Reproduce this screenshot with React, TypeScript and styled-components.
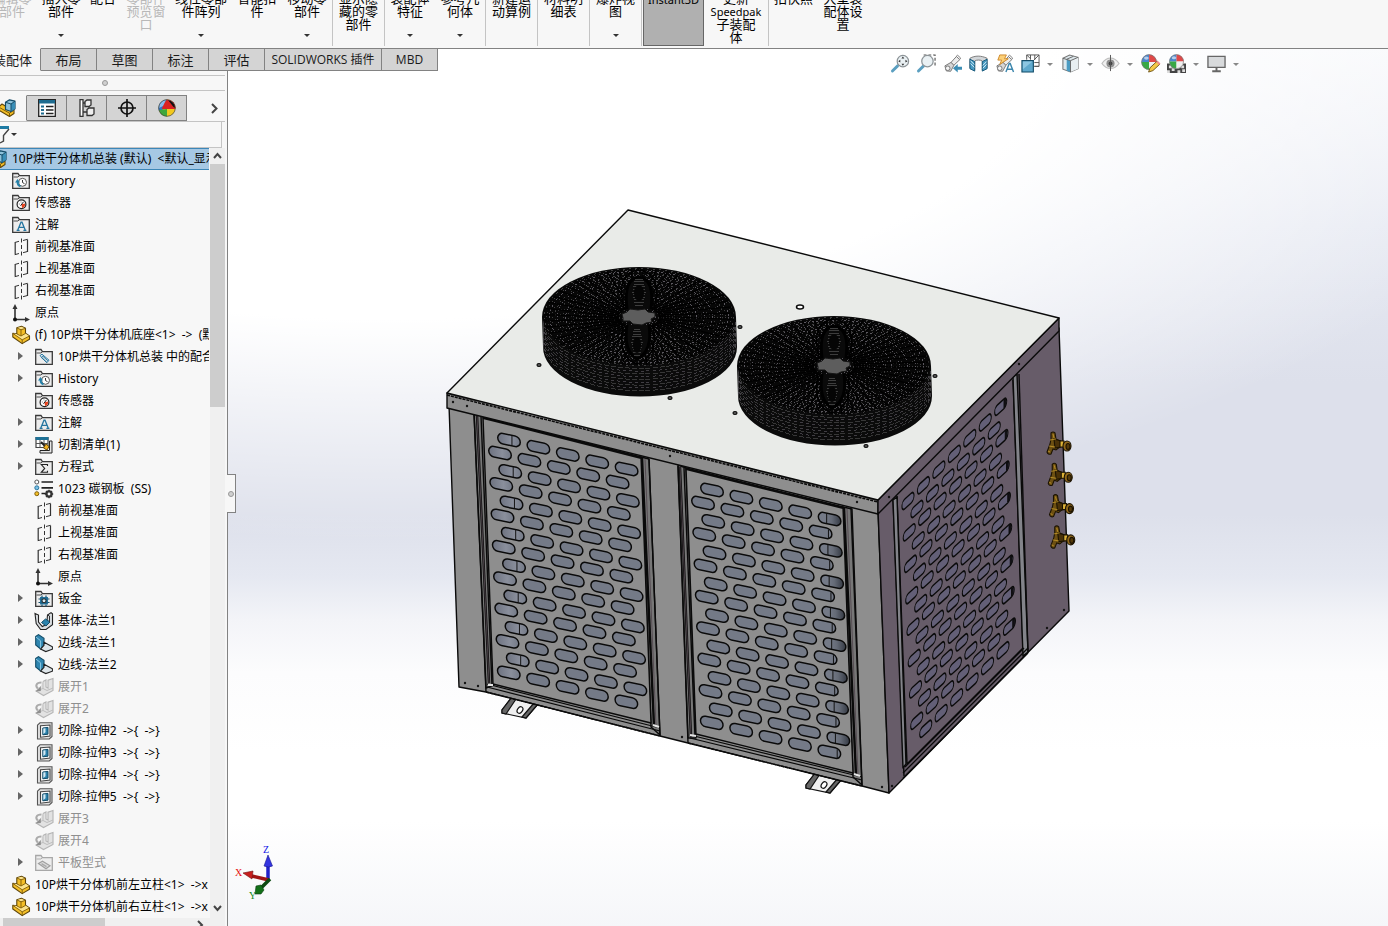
import React from "react";
import styled, { createGlobalStyle } from "styled-components";

const Global = createGlobalStyle`
  * { box-sizing: border-box; }
  body { margin: 0; overflow-x: hidden; }
  body, button, input {
    font-family: "Noto Sans", "Noto Sans CJK SC", sans-serif;
    font-size: 12px;
    color: #000;
  }
  button { padding: 0; border: 0; background: none; }
  ul { list-style: none; margin: 0; padding: 0; }
`;

const LINE = "#828282";

const Page = styled.div`
  display: flex;
  flex-direction: column;
  min-height: 100vh;
`;

/* ---------- ribbon ---------- */

const Ribbon = styled.header`
  display: flex;
  flex: none;
  height: 49px;
  overflow: hidden;
  background: #f7f7f7;
  border-bottom: 1px solid ${LINE};
`;

const Command = styled.button<{ $w: number; $sep?: boolean; $pressed?: boolean; $first?: boolean }>`
  display: flex;
  flex: none;
  flex-direction: column;
  align-items: center;
  width: ${(p) => p.$w}px;
  height: 54px;
  margin-top: -8px;
  margin-left: ${(p) => (p.$first ? -14 : p.$pressed ? 1 : 0)}px;
  padding-bottom: 9px;
  font-size: 13px;
  line-height: 13px;
  white-space: nowrap;
  background: ${(p) => (p.$pressed ? "#b0b0b0" : "none")};
  border: ${(p) => (p.$pressed ? "1px solid #666" : "0")};
  ${(p) => p.$sep && "border-right: 1px solid #c4c4c4;"}
  &:disabled { color: #b8b8b8; }
`;

const CommandText = styled.span`
  white-space: pre;
`;

const Small = styled.span`
  font-size: 11px;
  line-height: 1;
`;

const Caret = styled.span<{ $color?: string }>`
  width: 0;
  height: 0;
  border: 3px solid transparent;
  border-top-color: ${(p) => p.$color ?? "#333"};
  border-bottom: 0;
`;

const CommandCaret = styled(Caret)`
  margin-top: auto;
`;

type Cmd = { text: string; w: number; sep?: boolean; menu?: boolean; off?: boolean; pressed?: boolean };
const commands: Cmd[] = [
  { text: "编辑零\n部件", w: 52, off: true },
  { text: "插入零\n部件", w: 46, menu: true },
  { text: "配合", w: 38 },
  { text: "零部件\n预览窗\n口", w: 48, off: true },
  { text: "线性零部\n件阵列", w: 62, menu: true },
  { text: "智能扣\n件", w: 50 },
  { text: "移动零\n部件", w: 51, sep: true, menu: true },
  { text: "显示隐\n藏的零\n部件", w: 52, sep: true },
  { text: "装配体\n特征", w: 50, menu: true },
  { text: "参考几\n何体", w: 51, sep: true, menu: true },
  { text: "新建运\n动算例", w: 52, sep: true },
  { text: "材料明\n细表", w: 52, sep: true },
  { text: "爆炸视\n图", w: 52, sep: true, menu: true },
  { text: "Instant3D", w: 61, pressed: true },
  { text: "更新\nSpeedpak\n子装配\n体", w: 65, sep: true },
  { text: "拍快照", w: 49 },
  { text: "大型装\n配体设\n置", w: 50 },
];

/* ---------- workspace ---------- */

const Workspace = styled.div`
  display: flex;
  flex: 1;
  flex-direction: column;
  background:
    radial-gradient(ellipse 86% 56% at 28% 0, #fff 55%, rgba(255, 255, 255, 0) 100%),
    linear-gradient(#f7f8fb, #e6e9f2 20%, #dde0eb 38%, #dde0eb 53%, #e5e8f1 60%, #f3f4f8 65%, #fcfcfd 71%, #fff 80%, #fff 88%, #f5f6f9);
`;

const TopRow = styled.div`
  display: flex;
  flex: none;
  justify-content: space-between;
  height: 22px;
`;

const TabList = styled.nav`
  display: flex;
  margin-top: -1px;
`;

const Tab = styled.button<{ $w: number; $active?: boolean }>`
  width: ${(p) => p.$w}px;
  height: 23px;
  display: flex;
  justify-content: ${(p) => (p.$active ? "flex-end" : "center")};
  align-items: center;
  padding-right: ${(p) => (p.$active ? 8 : 0)}px;
  overflow: hidden;
  white-space: nowrap;
  line-height: 20px;
  color: #1a1a1a;
  font-size: 13px;
  background: ${(p) => (p.$active ? "#f7f7f7" : "#d4d4d4")};
  border: 1px solid ${LINE};
  border-left: 0;
  ${(p) => p.$active && "border-top-color: #f7f7f7; border-bottom-color: #f7f7f7;"}
`;

const TabSmall = styled.span`
  font-size: 12px;
  font-family: "Open Sans", "Noto Sans CJK SC", sans-serif;
`;

const tabs: [string, number][] = [["装配体", 41], ["布局", 56], ["草图", 56], ["标注", 56], ["评估", 56], ["SOLIDWORKS 插件", 117], ["MBD", 56]];

const Hud = styled.div`
  display: flex;
  align-items: center;
  height: 20px;
  margin: 5px 145px 0 0;
`;

const HudButton = styled.button`
  display: flex;
  justify-content: center;
  width: 26px;
  height: 20px;
`;

const HudMenu = styled.button`
  display: flex;
  justify-content: center;
  width: 14px;
`;

const Body = styled.div`
  display: flex;
  flex: 1;
`;

/* ---------- feature manager ---------- */

const Sidebar = styled.aside`
  position: relative;
  display: flex;
  flex: none;
  flex-direction: column;
  width: 228px;
  padding-right: 2px;
  background: #f7f7f7;
  border-right: 1px solid ${LINE};
`;

const Grip = styled.div`
  display: flex;
  flex: none;
  align-items: center;
  justify-content: center;
  height: 16px;
  margin-top: 4px;
  padding-right: 16px;
  border: solid #c4c4c4;
  border-width: 1px 0;
`;

const Dot = styled.span`
  width: 6px;
  height: 6px;
  border: 1px solid #999;
  border-radius: 50%;
  background: #d0d0d0;
`;

const PaneTabs = styled.div`
  display: flex;
  flex: none;
  height: 27px;
  margin-top: 4px;
  border-bottom: 1px solid #c4c4c4;
`;

const PaneTab = styled.button<{ $active?: boolean }>`
  display: flex;
  align-items: center;
  justify-content: center;
  width: ${(p) => (p.$active ? 27 : 40)}px;
  height: 26px;
  overflow: hidden;
  background: ${(p) => (p.$active ? "#f7f7f7" : "#d4d4d4")};
  border: 1px solid ${LINE};
  border-left: 0;
  ${(p) => p.$active && "border-color: #f7f7f7 #828282 #f7f7f7 #f7f7f7; justify-content: flex-end; padding-right: 9px;"}
`;

const More = styled.button`
  margin: 0 7px 0 auto;
  display: flex;
  align-items: center;
`;

const Filter = styled.div`
  display: flex;
  flex: none;
  align-items: center;
  gap: 2px;
  height: 26px;
  margin-right: 3px;
  border: solid #c4c4c4;
  border-width: 0 1px 1px 0;
`;

const FilterInput = styled.input`
  flex: 1;
  min-width: 0;
  height: 22px;
  border: 0;
  outline: 0;
  background: none;
`;

const TreeArea = styled.div`
  display: flex;
  flex: 1;
`;

const Tree = styled.ul`
  flex: 1;
  min-width: 0;
  margin-right: 1px;
  overflow: hidden;
`;

const Row = styled.li<{ $level: number; $off?: boolean }>`
  display: flex;
  align-items: center;
  gap: 4px;
  height: 22px;
  padding-left: ${(p) => (p.$level === 0 ? 12 : p.$level === 1 ? 16 : 0)}px;
  line-height: 20px;
  white-space: pre;
  color: ${(p) => (p.$off ? "#8f8f8f" : "#000")};
  ${(p) => p.$level < 0 && "background: #a6c8e4; border: solid #3d87b8; border-width: 1px 0; margin-left: -11px;"}
`;

const Twisty = styled.button<{ $hidden?: boolean }>`
  flex: none;
  width: 15px;
  height: 16px;
  visibility: ${(p) => (p.$hidden ? "hidden" : "visible")};
  &::before {
    content: "";
    display: block;
    width: 0;
    margin: 0 0 2px 2px;
    border: 4px solid transparent;
    border-left: 5px solid #666;
    border-right: 0;
  }
`;

const VScroll = styled.div`
  display: flex;
  flex: none;
  flex-direction: column;
  align-items: center;
  justify-content: space-between;
  width: 15px;
  padding: 4px 0 6px;
  background: #f0f0f0;
`;

const VThumb = styled.div`
  width: 15px;
  height: 243px;
  margin: 5px 0 auto;
  background: #cdcdcd;
`;

const HScroll = styled.div`
  display: flex;
  flex: none;
  justify-content: space-between;
  height: 9px;
  padding: 0 21px 0 3px;
  overflow: hidden;
  background: #f0f0f0;
`;

const HThumb = styled.div`
  width: 102px;
  height: 9px;
  background: #cdcdcd;
`;

const Handle = styled.button`
  position: absolute;
  right: -9px;
  top: 403px;
  display: flex;
  align-items: center;
  justify-content: center;
  width: 9px;
  height: 39px;
  background: #f7f7f7;
  border: 1px solid ${LINE};
  border-left: 0;
`;

const Viewport = styled.main`
  flex: 1;
  min-width: 0;
`;

const Drawing = styled.svg`
  display: block;
  width: 100%;
  height: auto;
`;

/* ---------- icons ---------- */

const Ico = styled.svg`
  flex: none;
  overflow: visible;
`;

const Folder = ({ c = "#3a3a3a" }: { c?: string }) => (
  <g>
    <path d="M.7 16.3V1.5h5.300l1.400 2.200h9.900v12.600z" fill="#ededed" stroke={c} strokeWidth="1.300" />
    <path d="M1.500 5h4.500l1.200-1.200" stroke={c} fill="none" strokeWidth=".9" />
  </g>
);

const glyphs: Record<string, React.ReactNode> = {
  history: (<><Folder /><circle cx="10.500" cy="10.300" r="4" fill="#fff" stroke="#555" /><path d="M10.500 8v2.500l2 1.200" stroke="#333" fill="none" /><path d="M8.500 14.500Q5.500 13.500 5.500 10" stroke="#2380a8" strokeWidth="1.800" fill="none" /><path d="M3 10.500h5L5.500 7z" fill="#2380a8" /></>),
  sensor: (<><Folder /><circle cx="9.500" cy="10.200" r="4.400" fill="#fff" stroke="#222" strokeWidth="1.200" /><path d="M9.500 10.300 13 9.500a4 4 0 0 1-3 4.500z" fill="#e8431c" /><path d="m8.500 11.800 3-4" stroke="#222" /><path d="M6.800 10h1M9 7.500v1" stroke="#777" /></>),
  note: (<><Folder /><path d="M5.800 14 9 6.200h1l3.200 7.800M7.200 11.400h4.600M4.600 14.300h3M11.400 14.300h3" stroke="#2676a0" strokeWidth="1.300" fill="none" /></>),
  mates: (<><Folder /><path d="m5 7.600 2-1.400 7 6-2 2.400-5.600-5 1.400-1.400 5 4.600M5 7.600l6.800 7" stroke="#2676a0" fill="none" /></>),
  sigma: (<><Folder /><path d="M12.500 8V6.500H6.300l3.400 3.900-3.400 3.900h6.200v-1.500" stroke="#222" strokeWidth="1.100" fill="none" /></>),
  sheet: (<><Folder /><path d="M5 7h8v7.500H5z" fill="#2676a0" /><path d="M7 5.500v11M11 5.500v11M3.500 9h11M3.500 12.500h11" stroke="#15506e" strokeWidth="1.200" strokeDasharray="2 1" /><circle cx="9" cy="10.800" r="2" fill="#dce8ee" stroke="#222" /></>),
  flat: (<><Folder c="#a8a8a8" /><path d="m3.500 9.500 4-2.200 7.500 4.500-4 3z" fill="#ddd" stroke="#a0a0a0" strokeWidth="1.200" /><path d="m6.500 9.600 5 3" stroke="#aaa" strokeWidth="1.600" /></>),
  plane: (<><path d="M3.200 4.200V16.500M15.500 1.500V14" fill="none" stroke="#333" strokeWidth="1.200" /><path d="m2.800 4.500 4.200-1.200M11 2.500l4.500-1.200M2.800 16.700 7 15.500M11 14.700l4.500-1.200" stroke="#333" /><path d="M9.500 .5v17" stroke="#333" strokeDasharray="4 2.500" /></>),
  origin: (<><path d="M3 3v12.500h12" fill="none" stroke="#333" strokeWidth="1.600" /><path d="m.5 5 2.500-5 2.500 5zM13 13l5 2.500-5 2.500z" fill="#333" /><circle cx="3" cy="15.500" r="2" fill="#111" /></>),
  part: (<><path d="M4.800 1.700 9.500.3l4 2v5l4 2.700v3.300l-7.300 4.300L.8 11V7.300l4 .6z" fill="#f4bf27" stroke="#5e4509" strokeWidth="1.100" strokeLinejoin="round" /><path d="m5.200 2 4.300-1.200 3.600 1.600L9 3.600zM1.200 7.600l3.600.4L9 10l4.500-2.500 3.600 2.500-6.900 3.800z" fill="#fce48c" /><path d="M9 3.800v6M5 2l4 1.800 4.500-1.500M5 8l4 2 4.500-2.600M1 7.500l9.200 6.300 7.300-3.800M10.200 13.800v3.500" stroke="#7d5b0c" strokeWidth=".9" fill="none" /></>),
  asm: (<><path d="M.5 8 4 5l5 3 7 3v3.500l-4.500 3L.5 11z" fill="#f4bf27" stroke="#5e4509" strokeWidth="1.100" strokeLinejoin="round" /><path d="m1 8.200 10.500 6 4.500-3M11.500 14v3.500" stroke="#7d5b0c" fill="none" /><path d="m7.500 3.300 4-2.500 5.500 1.400v7.600L13 12.500l-5.500-2z" fill="#8dc2dc" stroke="#134c68" strokeWidth="1.200" strokeLinejoin="round" /><path d="M13 5v7.500l4-2.700V2.500z" fill="#3a8fb8" /><path d="M7.500 3.300 13 5l4-2.800M13 5v7.500" stroke="#134c68" fill="none" /></>),
  cutlist: (<><path d="M1 1.500h12v10H1z" fill="#fff" stroke="#444" strokeWidth="1.200" /><path d="M.5 1h13v3H.5z" fill="#1e7196" /><path d="M1 7.500h12M5 4v7.500M9 4v7.500" stroke="#555" /><path d="M17 5v12H5v-2.500h9.500V5z" fill="#e8e8e8" stroke="#222" /><path d="m6 6 4 4" stroke="#222" strokeWidth="2" /><path d="m11 8 3 2.500-2 3.500-3.500-2z" fill="#f3b322" stroke="#6b4e0a" /></>),
  material: (<><path d="M6.500 2H18M6.500 7.800H18M6.500 13.500H12" stroke="#222" strokeWidth="1.700" /><circle cx="1.800" cy="2" r="2" fill="#fff" stroke="#555" /><circle cx="1.800" cy="7.800" r="2" fill="#7ec0e4" stroke="#2676a0" /><circle cx="1.800" cy="13.700" r="2" fill="#f4bf27" stroke="#80600d" /><circle cx="14" cy="14" r="2.600" fill="none" stroke="#333" strokeWidth="2.200" /><path d="M14 9.800v8.400M9.800 14h8.400M11 11l6 6M17 11l-6 6" stroke="#333" strokeWidth="1.300" /><circle cx="14" cy="14" r="1.400" fill="#f7f7f7" /></>),
  base: (<><path d="M0 1.500 3.500 3v7l3.800 4.600 4.400-2.300L12.500 3 16 .6l1.500 1.200v11L11 17.500H5.600L1.200 11.600z" fill="#d9dde0" stroke="#222" strokeWidth="1.100" /><path d="m6.500 10.500 4-3.500 4.500 3-4 4z" fill="#2c83ad" stroke="#134c68" /><path d="m12.500 3 2 1v6" stroke="#333" fill="none" /></>),
  edge: (<><path d="M.7 2.500 3.500.6 9 4.400v7L5.600 15 .7 11z" fill="#2f86b0" stroke="#134c68" strokeWidth="1.100" /><path d="m1 3 4.600 3.800v8" stroke="#8ec9e4" fill="none" /><path d="m5.600 15 3.400-3.600V8.200l8.400 4.600v2.400l-6.600 2.400z" fill="#dfe6ea" stroke="#222" strokeWidth="1.100" /></>),
  unfold: (<><path d="M8 3.500 11 2v7l2 1V2.200l5-1.700v12L8.500 17.500 1 13l3-2" fill="#e2e2e2" stroke="#b5b5b5" strokeWidth="1.100" /><path d="M8 3.500v7l4 2 6-2.500M8 10.500 4 12" stroke="#bdbdbd" fill="none" /><path d="M6.500 4.500C1 4.500 0 8 3 10.500" stroke="#ababab" strokeWidth="2" fill="none" /><path d="m.8 13.500 5-.5V8z" fill="#8f8f8f" /></>),
  cut: (<><path d="M2.500 3.200 5 .8h12v13.700L14.300 17H2.500z" fill="#e2e2e2" stroke="#555" strokeWidth="1.100" /><path d="M5.500 3.800 15 3v11l-9.500 1.200z" fill="#fafafa" stroke="#444" strokeWidth="1.100" /><path d="M7.800 6 13 5.400v6.800l-5.200.6z" fill="#2c83ad" stroke="#134c68" /><path d="M8.300 6.500 10.500 6.200v4L8.300 12z" fill="#d4e9f3" /></>),
};

const TreeIcon = ({ name }: { name: string }) => (
  <Ico width="19" height="18" viewBox="0 0 19 18" aria-hidden="true">{glyphs[name]}</Ico>
);

const Ball = ({ s = 18 }: { s?: number }) => (
  <g transform={`scale(${s / 18})`}>
    <circle cx="9" cy="9" r="8.500" fill="#e8e8e8" />
    <path d="M9 9V.5A8.500 8.500 0 0 0 .5 9z" fill="#4a86cc" />
    <path d="M9 9H.5A8.500 8.500 0 0 0 9 17.500z" fill="#39a845" />
    <path d="M9 9V.5A8.500 8.500 0 0 1 17.500 9z" fill="#e04848" />
    <path d="M9 9h8.500A8.500 8.500 0 0 1 9 17.500z" fill="#f0f0f0" />
    <circle cx="9" cy="9" r="8.300" fill="none" stroke="#777" strokeWidth=".8" />
    <ellipse cx="6" cy="4.500" rx="2.600" ry="1.800" fill="#fff" opacity=".6" />
  </g>
);

const Lens = ({ x }: { x: number }) => (
  <>
    <path d="m1.500 18 5.500-5.500" stroke="#5b9fc0" strokeWidth="3" strokeLinecap="round" />
    <circle cx={x} cy="7.500" r="6" fill="#eaf1f4" stroke="#8d9498" strokeWidth="1.300" />
  </>
);

const Scope = () => (
  <>
    <path d="M2 12.500 8.500 8.800l3 3-3.400 6.400-4.600-.4z" fill="#d6d6d6" stroke="#777" />
    <path d="m8.500 8.800 6-6.600L18 5.600l-6.500 6.200z" fill="#ececec" stroke="#777" />
    <circle cx="5" cy="15" r="2.400" fill="#f4f4f4" stroke="#777" />
    <path d="m14 2.500 1.400-1.200 3.200 3-1.200 1.400z" fill="#fff" stroke="#777" />
  </>
);

type HudItem = { label: string; art: React.ReactNode; menu?: boolean };
const hud: HudItem[] = [
  { label: "整屏显示全图", art: <><Lens x={12.5} /><path d="M12.500 2.600 14 4.800h-3zM12.500 12.400l-1.500-2.200h3zM7.600 7.500 9.800 6v3zM17.400 7.500 15.200 9V6z" fill="#333" /></> },
  { label: "局部放大", art: <><path d="M7 1h12v12" stroke="#555" strokeWidth="1.200" strokeDasharray="3 2" fill="none" /><Lens x={11} /></> },
  { label: "上一视图", art: <><Scope /><path d="M20 16.500h-4.500V19.500L10.500 15l5-4.500v3H20z" fill="#3c8db4" /></> },
  { label: "剖面视图", art: <><path d="M1 4.500c5-3 12-3 18 0V15l-5 2V7.400c-2-1.400-6-1.400-8 0V17l-5-2z" fill="#d2d6d9" stroke="#777" /><path d="M1 5.500 6 8v10l-5-2.500zM14 8l5-2.500v10L14 18z" fill="#4a9bc2" stroke="#155a7c" /><path d="m1.500 10 4 4M1.500 7l4 4M14.500 12l4-4M14.500 15l4-4" stroke="#d9eef8" /></> },
  { label: "动态注解视图", art: <><Scope /><path d="M5 1h7l-2 4h4L5 11l2-4.600H3z" fill="#fbd078" stroke="#d08a2c" /><path d="m11.500 19 3.500-9h1l3.500 9M13 16h5" stroke="#3c86ad" strokeWidth="1.500" fill="none" /></> },
  { label: "视图定向", menu: true, art: <><path d="M6 6V1h13v12h-5M6 1l4 4M19 1l-6 6M14 13h5M10 1v5M14.500 1v5M14 9h5" fill="none" stroke="#555" /><path d="M1 7h12v12H1z" fill="#5fa9cd" stroke="#134c68" strokeWidth="1.200" /><path d="M2 8h10L2 16z" fill="#8cc6e1" /></> },
  { label: "显示样式", menu: true, art: <><path d="m2 4.500 7-3.500 9 2.500v12L10 19l-8-3z" fill="#dde8ed" stroke="#777" strokeWidth="1.100" /><path d="M10 7v12l8-3.500v-12z" fill="#e8eef1" /><path d="M6 5.500v12l4 1.500V7z" fill="#4a9bc2" /><path d="M10 7v12M2 4.500 10 7l8-3.500M6 5.500l7-3" fill="none" stroke="#666" /></> },
  { label: "隐藏/显示项目", menu: true, art: <><path d="M1 10c5-7.500 13-7.500 18 0-5 7-13 7-18 0z" fill="#f0f0f0" stroke="#c0c0c0" strokeWidth="1.300" /><circle cx="10" cy="10" r="4.300" fill="#909090" /><circle cx="10" cy="10" r="2" fill="#444" /><path d="M10 1v17" stroke="#555" /></> },
  { label: "编辑外观", art: <><Ball s={17} /><path d="m8 19 1.500-4.500L17 7.500l3 3-7.500 7z" fill="#f5c945" stroke="#70551a" /><path d="m16 8.500 1.500-1.500 3 3-1.500 1.500z" fill="#ec8d8d" /></> },
  { label: "应用布景", menu: true, art: <><path d="M0 10h20v10H0z" fill="#444" /><path d="M2 12h3v3H2zM15 12h3v3h-3zM5 15h3v3H5zM11 17h3v3h-3zM0 17h3v3H0zM16 16h3v3h-3z" fill="#ddd" /><g transform="translate(2 0)"><Ball s={16} /></g></> },
  { label: "视图设置", menu: true, art: <><path d="M1 2.500h18v11.500H1z" fill="#d8dadc" stroke="#666" strokeWidth="1.400" /><path d="M10 14v4M5.500 18.200h9" stroke="#666" strokeWidth="2" /></> },
];

/* ---------- tree data ---------- */

type Node = [level: number, icon: string, text: string, expandable?: boolean, off?: boolean];
const nodes: Node[] = [
  [-1, "asm", "10P烘干分体机总装 (默认)  <默认_显示状态-1>"],
  [0, "history", "History"],
  [0, "sensor", "传感器"],
  [0, "note", "注解"],
  [0, "plane", "前视基准面"],
  [0, "plane", "上视基准面"],
  [0, "plane", "右视基准面"],
  [0, "origin", "原点"],
  [0, "part", "(f) 10P烘干分体机底座<1>  ->  (默认)"],
  [1, "mates", "10P烘干分体机总装 中的配合", true],
  [1, "history", "History", true],
  [1, "sensor", "传感器"],
  [1, "note", "注解", true],
  [1, "cutlist", "切割清单(1)", true],
  [1, "sigma", "方程式", true],
  [1, "material", "1023 碳钢板  (SS)"],
  [1, "plane", "前视基准面"],
  [1, "plane", "上视基准面"],
  [1, "plane", "右视基准面"],
  [1, "origin", "原点"],
  [1, "sheet", "钣金", true],
  [1, "base", "基体-法兰1", true],
  [1, "edge", "边线-法兰1", true],
  [1, "edge", "边线-法兰2", true],
  [1, "unfold", "展开1", false, true],
  [1, "unfold", "展开2", false, true],
  [1, "cut", "切除-拉伸2  ->{  ->}", true],
  [1, "cut", "切除-拉伸3  ->{  ->}", true],
  [1, "cut", "切除-拉伸4  ->{  ->}", true],
  [1, "cut", "切除-拉伸5  ->{  ->}", true],
  [1, "unfold", "展开3", false, true],
  [1, "unfold", "展开4", false, true],
  [1, "flat", "平板型式", true, true],
  [0, "part", "10P烘干分体机前左立柱<1>  ->x"],
  [0, "part", "10P烘干分体机前右立柱<1>  ->x"],
];

/* ---------- model ---------- */

const range = (n: number) => Array.from({ length: n }, (_, i) => i);

const FrontSlots = ({ x, y, side }: { x: number; y: number; side: "left" | "right" }) => (
  <>
    {range(16).map((r) => {
      const odd = r % 2;
      const k = (r - odd) / 2;
      return range(5).map((c) => {
        const cx = x - 9 * odd + 1.25 * k + 29.4 * c;
        const cy = y + 13 * odd + 31.4 * k + 7.25 * c;
        const first = side === "left" && c === 0;
        const last = side === "right" && c === 4;
        const fill = first ? "url(#slotL)" : last && !odd ? "url(#slotR)" : "#747a87";
        return (
          <g key={`${r}-${c}`} transform={`matrix(.98 .2 0 1 ${cx} ${cy})`}>
            <rect x="-11.500" y="-5.300" width="23" height="10.600" rx="5.300" fill={fill} stroke="#0a0a0a" strokeWidth="1.500" />
            {first && !odd && <path d="M3 -5v10" stroke="#111" />}
            {last && <path d={odd ? "M8 -4v9" : "M-3 -5v10"} stroke="#111" />}
          </g>
        );
      });
    })}
  </>
);

const SideSlots = () => (
  <>
    {range(16).map((r) => {
      const odd = r % 2;
      const k = (r - odd) / 2;
      return range(odd ? 6 : 7).map((c) => {
        const cx = 908 + 9 * odd + 1.25 * k + 15.45 * c;
        const cy = 501 + 8 * odd + 31.4 * k - 15.7 * c;
        return (
          <g key={`${r}-${c}`} transform={`matrix(.55 -.5 0 1 ${cx} ${cy})`}>
            <rect x="-11" y="-4.800" width="22" height="9.600" rx="5" fill="#635f77" stroke="#0a0a0a" strokeWidth="1.800" />
            {c === 6 && <path d="M6 -4v8l3 -1v-6z" fill="#15131a" stroke="#0a0a0a" />}
          </g>
        );
      });
    })}
  </>
);

const Fan = ({ x, y }: { x: number; y: number }) => (
  <g transform={`translate(${x} ${y})`}>
    <path d="M-97 0A97 50 0 0 1 97 0l1 30A97 49.500 0 0 1-96 30z" fill="#0b0b0b" />
    <g fill="none" strokeWidth=".7" shapeRendering="crispEdges">
      {range(10).map((i) => (
        <path key={i} d={`M-96 ${4 + i * 2.8}A97 49.500 0 0 0 97 ${4 + i * 2.8}`} strokeDasharray={i % 2 ? "5 2" : "3 3"} stroke={i % 2 ? "#4a4a4a" : "#57535b"} />
      ))}
    </g>
    <ellipse rx="96" ry="49" fill="#070707" />
    <g fill="none" strokeWidth=".8" shapeRendering="crispEdges">
      {range(30).map((i) => (
        <ellipse key={i} rx={17 + i * 2.68} ry={8.5 + i * 1.38} stroke={i % 3 ? "#4e4e4e" : "#716d76"} strokeDasharray={`${1 + (i % 2)} ${2 + (i % 3)}`} />
      ))}
    </g>
    <g stroke="#000" strokeWidth="1.300">
      {range(48).map((i) => {
        const a = (i * Math.PI) / 24 + 0.06;
        return <path key={i} d={`M${(20 * Math.cos(a)).toFixed(1)} ${(10 * Math.sin(a)).toFixed(1)}L${(95 * Math.cos(a + 0.12)).toFixed(1)} ${(48 * Math.sin(a + 0.12)).toFixed(1)}`} />;
      })}
    </g>
    <g fill="none" stroke="#000">
      <path d="M-15-8Q-24-44 0-47Q24-44 15-8" strokeWidth="1.500" />
      <path d="M-12-8Q-16-38 0-40Q16-38 12-8" strokeWidth="3" fill="#0a0a0a" />
      <path d="M-16 8Q-22 40-2 47Q20 40 14 8" strokeWidth="1.500" />
      <path d="M-12 8Q-16 34-2 42Q14 34 10 8" strokeWidth="3" fill="#0a0a0a" />
    </g>
    <g stroke="#3d3d3d" shapeRendering="crispEdges">
      {range(11).map((i) => (
        <path key={i} d={`M${-7 + Math.abs(5 - i) * 0.6} ${-38 + i * 2.6}h${14 - Math.abs(5 - i) * 1.2}M${-8 + Math.abs(5 - i) * 0.6} ${12 + i * 2.6}h${12 - Math.abs(5 - i) * 1.2}`} />
      ))}
    </g>
    <ellipse cy="-24" rx="5" ry="8" fill="#050505" />
    <ellipse cx="-2" cy="28" rx="4" ry="8" fill="#050505" />
    <path d="M-17-3l5-2 3-3 8 1 7-1 3 3 7 1v4l-4 2 1 3-6 1-4 2-9-1-3-3-7 0v-3z" fill="#5d5d5d" stroke="#161616" />
  </g>
);

const Valve = ({ x, y }: { x: number; y: number }) => (
  <g transform={`translate(${x} ${y})`} stroke="#1c1302" strokeWidth="1.100">
    <path d="M-2-10q2-2 4 0l1 6 4 2 1 5-5 4-3-1-2 5q-3 1-4-2l3-8 1-5z" fill="#6d5012" />
    <path d="M1-4l7 2v6l-6 1z" fill="#4a3208" />
    <path d="M7-2h4v6H7z" fill="#dcb138" />
    <ellipse cx="14" cy="3" rx="4" ry="5" fill="#92691a" />
    <ellipse cx="15" cy="3.500" rx="2" ry="3" fill="#553a0a" />
    <path d="M-3-3l6-1M-4 3l6 1M0-9l1 4M-5 8l2 1" stroke="#c99d2c" strokeWidth=".8" />
  </g>
);

const Foot = ({ x, y }: { x: number; y: number }) => (
  <g transform={`translate(${x} ${y})`} stroke="#111" strokeWidth="1.200">
    <path d="M10-2L36 5 24 19 0 14v-3z" fill="#efefef" />
    <path d="M10-2 0 11v3l4 1L14 0z" fill="#666" />
    <path d="M36 5 24 19l-4-1L32 4z" fill="#666" />
    <ellipse cx="18" cy="11" rx="2.500" ry="3.500" transform="rotate(35 18 11)" fill="#fff" />
  </g>
);

const Model = () => (
  <Drawing viewBox="228 71 1160 855" role="img" aria-label="10P烘干分体机总装">
    <defs>
      <linearGradient id="slotL"><stop offset="0" stopColor="#6d7280" /><stop offset=".6" stopColor="#8a8f9c" /><stop offset="1" stopColor="#747a87" /></linearGradient>
      <linearGradient id="slotR"><stop offset=".3" stopColor="#747a87" /><stop offset=".6" stopColor="#656b77" /><stop offset="1" stopColor="#353a44" /></linearGradient>
    </defs>

    <Foot x={502} y={699} />
    <Foot x={806} y={774} />

    <g stroke="#0a0a0a" strokeWidth="1.400" strokeLinejoin="round">
      {/* front frame */}
      <path d="M449 405 878 510 889 793 862 786 688 743 660 736 486 692 459 687z" fill="#8e8e8e" />
      <path d="M474 413h10l10 272-8 3zM641 457l8 2 11 276-9-8zM678 465l8 3 10 270-8 0zM843 507l9 2 10 276-9-8z" fill="#777" />
      <g strokeWidth="2.400">
        <path d="M477 415 489 683M642 458 654 726M680 467 691 737M844 508 856 775" />
      </g>
      <path d="M477 415 489 683M680 467 691 737M645 459 656 726M847 509 858 775" stroke="#52474f" strokeWidth=".9" />
      <path d="M481 416 492 686M649 459 660 736M684 468 695 737M851 509 862 786M486 692 474 413M688 743 678 466" />
      {/* perforated panels */}
      <path d="M483 417 641 457 651 723 493 684z" fill="#8e8e8e" />
      <path d="M686 468 843 507 853 773 696 734z" fill="#8e8e8e" />
      <path d="M483 418 641 458M686 469 843 508" strokeWidth="2" />
      {/* bottom rails */}
      <path d="M487 684 660 728M487 687 660 731M690 735 862 777M690 738 862 780" strokeWidth="1.200" />
      <path d="M488 685h5M653 725l6 2M690 735l6 1M854 774l6 2" stroke="#e6e6e6" strokeWidth="2" />
      <path d="M486 692 660 736M688 743 862 786" strokeDasharray="3 1" />
      {/* side frame */}
      <path d="M878 510 1059 328 1069 611 889 793z" fill="#675c69" />
      <path d="M893 499 904 776M897 496 907 764 1023 648 1013 380" fill="none" />
      <path d="M1013 377 1017 374 1028 652 1023 656z" fill="#83848a" />
      <path d="M893 500 897 497 906 764 903 768z" fill="#83848a" />
      <path d="M903 773 1028 648M903 778 1028 653M905 767 1024 648" strokeWidth="1.300" />
      <path d="M1019 374 1028 652" />
      {/* lid */}
      <path d="M447 393 878 500 878 514 447 408z" fill="#8e8e8e" />
      <path d="M878 500 1059 318 1059 331 878 514z" fill="#675c69" />
      <path d="M628 210 1059 318 878 500 447 393z" fill="#e9ebe8" />
      <path d="M447 395 878 502" strokeWidth="1.600" strokeDasharray="3 1" />
    </g>

    <FrontSlots x={509} y={440} side="left" />
    <FrontSlots x={712} y={490} side="right" />
    <SideSlots />

    <Fan x={639} y={317} />
    <Fan x={834} y={366} />

    <g fill="#555" stroke="#0a0a0a" strokeWidth="1.200">
      {[[539, 365], [670, 398], [740, 327], [735, 413], [866, 446], [935, 376]].map(([x, y]) => (
        <ellipse key={`${x}`} cx={x} cy={y} rx="2" ry="1.500" />
      ))}
      <ellipse cx="800" cy="307" rx="3.500" ry="2" fill="#fff" strokeWidth="1.500" />
    </g>
    <g fill="#151515">
      {[[453, 402], [467, 406], [670, 456], [857, 502], [465, 683], [478, 686], [682, 737], [882, 787], [892, 786], [889, 497], [1019, 364], [1047, 628], [1064, 610]].map(([x, y]) => (
        <circle key={`${x}`} cx={x} cy={y} r="1.200" />
      ))}
    </g>
    {range(4).map((i) => (
      <Valve key={i} x={1053 + i * 1.25} y={443 + i * 31.3} />
    ))}

    {/* orientation triad */}
    <g>
      <path d="M268 880V866" stroke="#2020c8" strokeWidth="3.500" />
      <path d="m264 866 4-11 4.500 11q-4 2-8.500 0z" fill="#3434e0" stroke="#1a1a90" strokeWidth=".6" />
      <path d="m269 880-17-4" stroke="#a01414" strokeWidth="3.500" />
      <path d="m243 873 10-2-1 8z" fill="#c81e1e" stroke="#701010" strokeWidth=".6" />
      <path d="m270 879-9 9" stroke="#0d4a12" strokeWidth="3.500" />
      <path d="m255 894 1-8 5-1 3 5-3 4z" fill="#127018" stroke="#0b3a10" strokeWidth=".6" />
      <g fontFamily="Liberation Serif, serif" fontSize="10">
        <text x="263" y="853" fill="#1414e6">Z</text>
        <text x="235" y="876" fill="#e61414">X</text>
        <text x="249" y="899" fill="#128a18">Y</text>
      </g>
    </g>
  </Drawing>
);

const Chevron = ({ d, w, h }: { d: string; w: number; h: number }) => (
  <Ico width={w} height={h} viewBox={`0 0 ${w} ${h}`} aria-hidden="true">
    <path d={d} fill="none" stroke="#444" strokeWidth="2" />
  </Ico>
);

export default function App() {
  return (
    <Page>
      <Global />
      <Ribbon>
        {commands.map((c, i) => (
          <Command key={c.text} $w={c.w} $sep={c.sep} $pressed={c.pressed} $first={i === 0} disabled={c.off}>
            <CommandText>
              {c.text.split(/([A-Z]\w+)/).map((t) => (/^[A-Z]/.test(t) ? <Small key={t}>{t}</Small> : t))}
            </CommandText>
            {c.menu && <CommandCaret />}
          </Command>
        ))}
      </Ribbon>
      <Workspace>
        <TopRow>
          <TabList>
            {tabs.map(([t, w], i) => (
              <Tab key={t} $w={w} $active={i === 0}>
                {/^[A-Z]/.test(t) ? <TabSmall>{t}</TabSmall> : t}
              </Tab>
            ))}
          </TabList>
          <Hud>
            {hud.map((h) => (
              <React.Fragment key={h.label}>
                <HudButton aria-label={h.label}>
                  <Ico width="19" height="19" viewBox="0 0 20 20" aria-hidden="true">{h.art}</Ico>
                </HudButton>
                {h.menu && <HudMenu aria-label={`${h.label} 菜单`}><Caret $color="#888" /></HudMenu>}
              </React.Fragment>
            ))}
          </Hud>
        </TopRow>
        <Body>
          <Sidebar>
            <Grip><Dot /></Grip>
            <PaneTabs>
              <PaneTab $active aria-label="FeatureManager 设计树"><TreeIcon name="asm" /></PaneTab>
              <PaneTab aria-label="PropertyManager">
                <Ico width="18" height="18" viewBox="0 0 18 18" aria-hidden="true">
                  <path d="M.7.700h16.600v16.600H.7z" fill="#fff" stroke="#222" strokeWidth="1.300" />
                  <path d="M1 1h16v3.500H1z" fill="#1e6c90" />
                  <path d="M3 7.500h3M3 11h3M3 14.500h3" stroke="#1e6c90" strokeWidth="2.200" />
                  <path d="M8 7.500h7.500M8 11h7.500M8 14.500h7.500" stroke="#222" strokeWidth="1.300" />
                </Ico>
              </PaneTab>
              <PaneTab aria-label="ConfigurationManager">
                <Ico width="16" height="18" viewBox="0 0 16 18" aria-hidden="true">
                  <path d="M1 .7h3v16.600H1zM4 4h3M4 13h4" fill="#fff" stroke="#333" strokeWidth="1.300" />
                  <path d="M6 2.500 8 1h4v5l-2 1.500H6zM8 10.500 10 9h5v6l-2 1.500H8z" fill="#eee" stroke="#333" strokeWidth="1.300" />
                </Ico>
              </PaneTab>
              <PaneTab aria-label="DimXpertManager">
                <Ico width="18" height="18" viewBox="0 0 18 18" aria-hidden="true">
                  <circle cx="9" cy="9" r="6" fill="none" stroke="#111" strokeWidth="1.700" />
                  <path d="M9 0v18M0 9h18" stroke="#111" strokeWidth="1.700" />
                </Ico>
              </PaneTab>
              <PaneTab aria-label="DisplayManager">
                <Ico width="18" height="18" viewBox="0 0 18 18" aria-hidden="true">
                  <circle cx="9" cy="9" r="8.500" fill="#f2c81e" />
                  <path d="M9 9 1 12A8.500 8.500 0 0 1 9 .5z" fill="#2f74c8" />
                  <path d="M9 10v7.500A8.500 8.500 0 0 1 1 11z" fill="#3fa83c" />
                  <path d="M4 10Q5 4 9 .5a8.500 8.500 0 0 1 8.500 9.500z" fill="#dc2222" />
                  <path d="M10 1q6 1 7.500 8l-2-1z" fill="#111" />
                  <path d="M3 3q3-2.500 5-2L5 7 1 9q0-4 2-6z" fill="#8ab8ea" />
                  <circle cx="9" cy="9" r="8.300" fill="none" stroke="#444" strokeWidth=".7" />
                </Ico>
              </PaneTab>
              <More aria-label="更多"><Chevron d="M1 1 5.500 5.500 1 10" w={7} h={11} /></More>
            </PaneTabs>
            <Filter>
              <Ico width="9" height="18" viewBox="0 0 9 18" aria-hidden="true">
                <path d="M0 1.500h9" stroke="#1e7ba4" strokeWidth="3" />
                <path d="M9 3 3.500 9.500V15L0 17" fill="#f7f7f7" stroke="#444" strokeWidth="1.400" />
              </Ico>
              <Caret />
              <FilterInput aria-label="过滤器" />
            </Filter>
            <TreeArea>
              <Tree>
                {nodes.map(([level, icon, text, expandable, off], i) => (
                  <Row key={i} $level={level} $off={off}>
                    {level === 1 && <Twisty $hidden={!expandable} aria-label="展开" />}
                    <TreeIcon name={icon} />
                    <span>{text}</span>
                  </Row>
                ))}
              </Tree>
              <VScroll>
                <Chevron d="M1 6 4.500 2 8 6" w={9} h={7} />
                <VThumb />
                <Chevron d="M1 1 4.500 5 8 1" w={9} h={7} />
              </VScroll>
            </TreeArea>
            <HScroll>
              <HThumb />
              <Chevron d="M1 3 5 7 1 11" w={7} h={11} />
            </HScroll>
            <Handle aria-label="折叠面板"><Dot /></Handle>
          </Sidebar>
          <Viewport><Model /></Viewport>
        </Body>
      </Workspace>
    </Page>
  );
}
